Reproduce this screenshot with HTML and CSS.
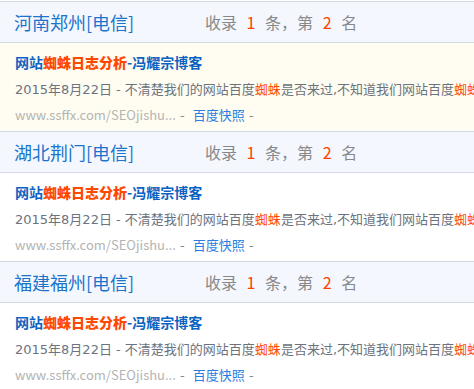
FILE: index.html
```html
<!DOCTYPE html>
<html lang="zh-CN">
<head>
  <meta charset="UTF-8">
  <meta name="viewport" content="width=device-width, initial-scale=1.0">
  <title>排名查询</title>
  <link rel="stylesheet" href="styles.css">
</head>
<body>
<div class="list">
  <div class="item active">
    <div class="item-head">
      <span class="area">河南郑州[电信]</span>
      <span class="rank">收录 <em>1</em> 条，第 <em>2</em> 名</span>
    </div>
    <div class="item-body">
      <div class="title"><a href="#">网站<b>蜘蛛日志分析</b>-冯耀宗博客</a></div>
      <div class="desc">2015年8月22日 - 不清楚我们的网站百度<b>蜘蛛</b>是否来过,不知道我们网站百度<b>蜘蛛</b></div>
      <div class="link"><span class="url">www.ssffx.com/SEOjishu...</span> - <a href="#">百度快照</a> -</div>
    </div>
  </div>
  <div class="item">
    <div class="item-head">
      <span class="area">湖北荆门[电信]</span>
      <span class="rank">收录 <em>1</em> 条，第 <em>2</em> 名</span>
    </div>
    <div class="item-body">
      <div class="title"><a href="#">网站<b>蜘蛛日志分析</b>-冯耀宗博客</a></div>
      <div class="desc">2015年8月22日 - 不清楚我们的网站百度<b>蜘蛛</b>是否来过,不知道我们网站百度<b>蜘蛛</b></div>
      <div class="link"><span class="url">www.ssffx.com/SEOjishu...</span> - <a href="#">百度快照</a> -</div>
    </div>
  </div>
  <div class="item">
    <div class="item-head">
      <span class="area">福建福州[电信]</span>
      <span class="rank">收录 <em>1</em> 条，第 <em>2</em> 名</span>
    </div>
    <div class="item-body">
      <div class="title"><a href="#">网站<b>蜘蛛日志分析</b>-冯耀宗博客</a></div>
      <div class="desc">2015年8月22日 - 不清楚我们的网站百度<b>蜘蛛</b>是否来过,不知道我们网站百度<b>蜘蛛</b></div>
      <div class="link"><span class="url">www.ssffx.com/SEOjishu...</span> - <a href="#">百度快照</a> -</div>
    </div>
  </div>
</div>
</body>
</html>
```

FILE: styles.css
```css
body {
  margin: 0;
  background: #fff;
  font-family: "Noto Sans CJK SC", "Liberation Sans", sans-serif;
  overflow: hidden;
}
a {
  text-decoration: none;
}
.list {
  width: 474px;
  overflow: hidden;
}
.item {
  padding-top: 1px;
}
.item-head {
  display: flex;
  height: 40px;
  line-height: 40px;
  padding-left: 14px;
  background: #f4f7fd;
  border-top: 1px solid #d3d8e0;
  border-bottom: 1px solid #d3dae6;
}
.area {
  width: 191px;
  font-size: 18px;
  color: #1a74cc;
}
.rank {
  font-size: 16px;
  color: #888;
}
.rank em {
  font-style: normal;
  color: #ff4200;
  padding: 0 6px;
}
.item-body {
  height: 87px;
  padding-left: 15px;
  box-sizing: border-box;
  padding-top: 9px;
  font-size: 13px;
}
.item.active .item-body {
  background: #fffdf1;
}
.title {
  line-height: 20px;
  font-size: 14px;
  font-weight: bold;
}
.title a {
  color: #0b63c1;
}
.title b {
  color: #ff4800;
}
.desc {
  margin-top: 7px;
  line-height: 22px;
  white-space: nowrap;
  font-family: "DejaVu Sans", "Noto Sans CJK SC", sans-serif;
  color: #6c737e;
}
.desc b {
  font-weight: normal;
  color: #ff4800;
}
.link {
  margin-top: 3px;
  line-height: 22px;
  font-family: "DejaVu Sans", "Noto Sans CJK SC", sans-serif;
  color: #888;
}
.link .url {
  font-family: "Noto Sans CJK SC", sans-serif;
  color: #b4b4b4;
}
.link a {
  margin-left: 4px;
  color: #2b7de0;
}
```
